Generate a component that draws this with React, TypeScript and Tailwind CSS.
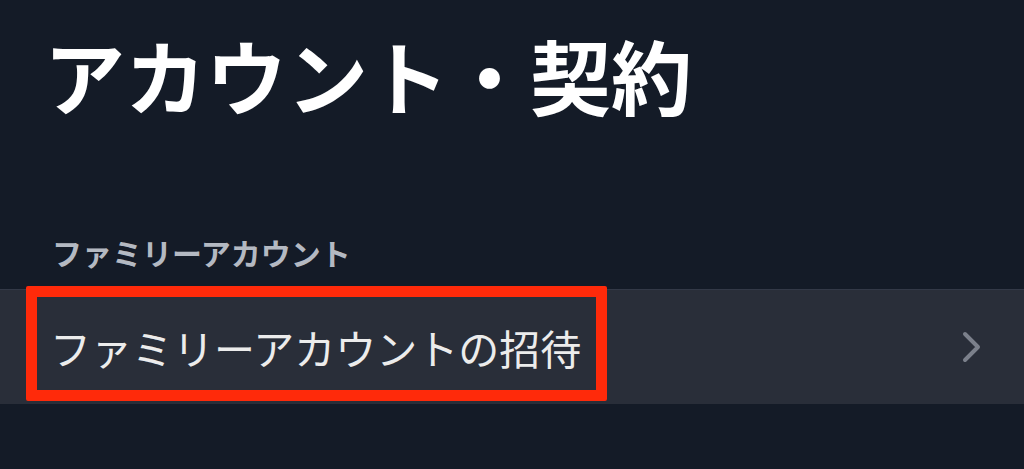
export default function App() {
  return (
    <div
      className="w-[1024px] h-[469px] bg-[#141b27] overflow-hidden flex flex-col"
      style={{ fontFamily: '"Noto Sans CJK JP", "Noto Sans", sans-serif' }}
    >
      <h1 className="pl-[44px] pt-[26px] text-[81px] leading-[96px] font-bold text-white">
        アカウント・契約
      </h1>

      <div className="mt-[112px] pl-[52px] text-[30px] leading-[36px] font-bold text-[#b4b9c2]">
        ファミリーアカウント
      </div>

      <div className="relative mt-[19px] h-[115px] bg-[#292e39] border-t border-[#333947] flex items-center justify-between pl-[50px] pr-[40px]">
        <span className="text-[41px] leading-[48px] text-[#ececec]">ファミリーアカウントの招待</span>
        <svg width="22" height="34" viewBox="0 0 22 34" fill="none" className="mr-[1px]">
          <path d="M4 4 L17 17 L4 30" stroke="#7b808b" strokeWidth="4" strokeLinecap="round" strokeLinejoin="round" />
        </svg>
        <div className="absolute left-[26px] top-[-4px] w-[581px] h-[115px] border-[11px] border-[#ff2a0a] rounded-[2px]" />
      </div>
    </div>
  );
}
